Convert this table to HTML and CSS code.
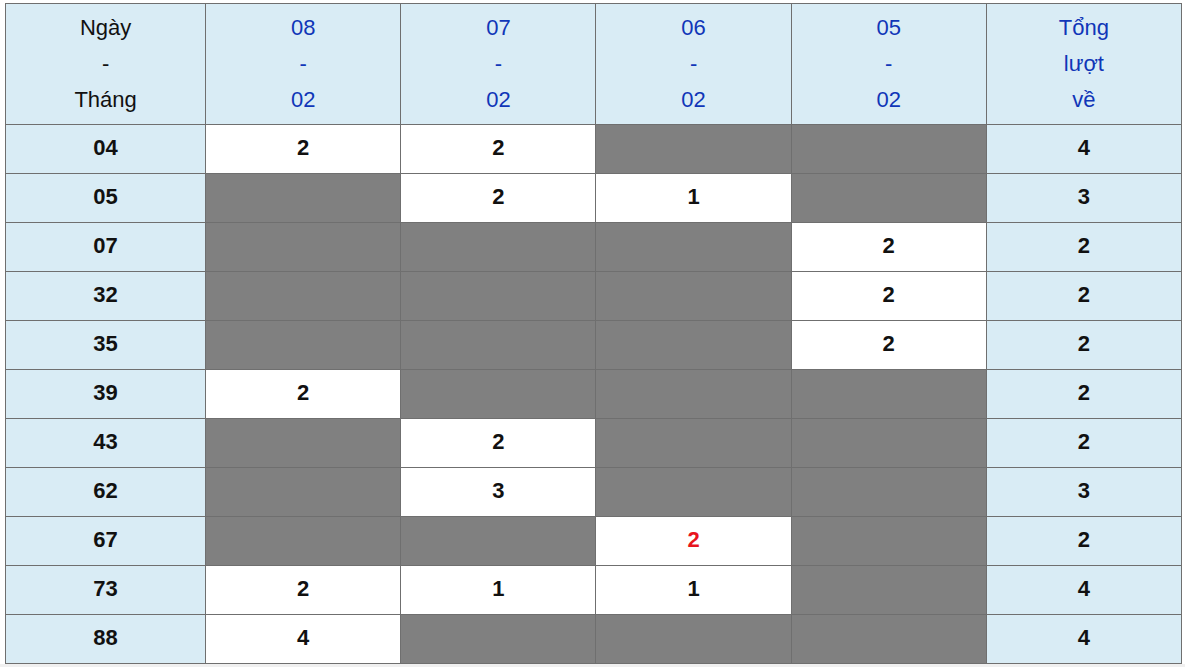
FILE: index.html
```html
<!DOCTYPE html>
<html lang="vi">
<head>
<meta charset="utf-8">
<link rel="stylesheet" href="styles.css">
</head>
<body>
<div class="wrap">
<table class="stats">
  <colgroup>
    <col class="c-first"><col class="c-day"><col class="c-day"><col class="c-day"><col class="c-day"><col class="c-day">
  </colgroup>
  <thead>
    <tr>
      <th class="head-label">Ngày<br>-<br>Tháng</th>
      <th class="head-date">08<br>-<br>02</th>
      <th class="head-date">07<br>-<br>02</th>
      <th class="head-date">06<br>-<br>02</th>
      <th class="head-date">05<br>-<br>02</th>
      <th class="head-date">Tổng<br>lượt<br>về</th>
    </tr>
  </thead>
  <tbody>
    <tr><td class="num">04</td><td class="hit">2</td><td class="hit">2</td><td class="miss"></td><td class="miss"></td><td class="total">4</td></tr>
    <tr><td class="num">05</td><td class="miss"></td><td class="hit">2</td><td class="hit">1</td><td class="miss"></td><td class="total">3</td></tr>
    <tr><td class="num">07</td><td class="miss"></td><td class="miss"></td><td class="miss"></td><td class="hit">2</td><td class="total">2</td></tr>
    <tr><td class="num">32</td><td class="miss"></td><td class="miss"></td><td class="miss"></td><td class="hit">2</td><td class="total">2</td></tr>
    <tr><td class="num">35</td><td class="miss"></td><td class="miss"></td><td class="miss"></td><td class="hit">2</td><td class="total">2</td></tr>
    <tr><td class="num">39</td><td class="hit">2</td><td class="miss"></td><td class="miss"></td><td class="miss"></td><td class="total">2</td></tr>
    <tr><td class="num">43</td><td class="miss"></td><td class="hit">2</td><td class="miss"></td><td class="miss"></td><td class="total">2</td></tr>
    <tr><td class="num">62</td><td class="miss"></td><td class="hit">3</td><td class="miss"></td><td class="miss"></td><td class="total">3</td></tr>
    <tr><td class="num">67</td><td class="miss"></td><td class="miss"></td><td class="hit red">2</td><td class="miss"></td><td class="total">2</td></tr>
    <tr><td class="num">73</td><td class="hit">2</td><td class="hit">1</td><td class="hit">1</td><td class="miss"></td><td class="total">4</td></tr>
    <tr><td class="num">88</td><td class="hit">4</td><td class="miss"></td><td class="miss"></td><td class="miss"></td><td class="total">4</td></tr>
  </tbody>
</table>
</div>
</body>
</html>
```

FILE: styles.css
```css
html, body {
  margin: 0;
  padding: 0;
  background: #f0f0f0;
}
.wrap {
  background: #ffffff;
  padding: 3px 4px 0 5px;
  height: 661px;
}
.stats {
  border-collapse: collapse;
  table-layout: fixed;
  width: 1177px;
  font-family: "Liberation Sans", Arial, sans-serif;
  font-size: 22px;
}
.c-first { width: 200px; }
.c-day { width: 195px; }
.stats th,
.stats td {
  border: 1px solid #6f6f6f;
  text-align: center;
  padding: 0;
}
.stats th {
  background: #d9ecf5;
  font-weight: normal;
  line-height: 36px;
  height: 108px;
  padding: 6px 0 6px;
  color: #1036b8;
}
.stats th.head-label {
  color: #111111;
}
.stats td {
  height: 49px;
  padding: 0 0 2px;
  box-sizing: border-box;
  font-weight: bold;
  color: #111111;
}
.stats td.num,
.stats td.total {
  background: #d9ecf5;
}
.stats td.hit {
  background: #ffffff;
}
.stats td.miss {
  background: #808080;
}
.stats td.red {
  color: #e8141e;
}
```
